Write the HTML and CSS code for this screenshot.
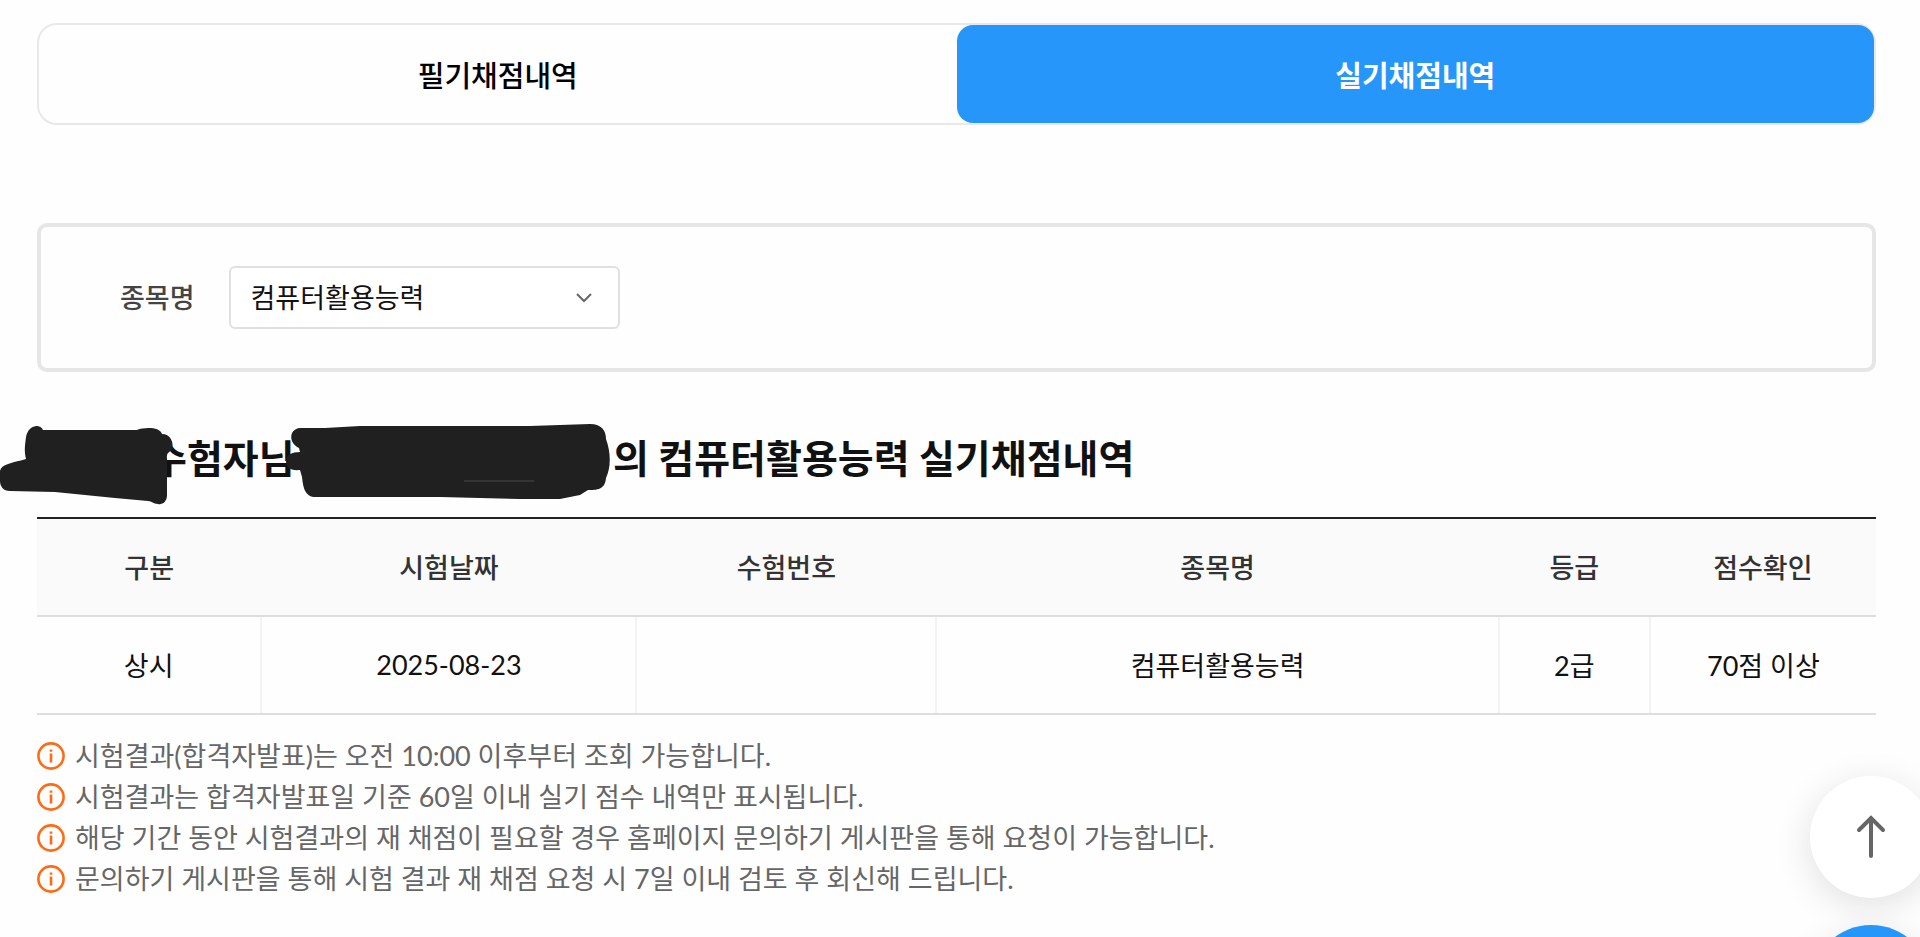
FILE: index.html
```html
<!DOCTYPE html>
<html lang="ko">
<head>
    <meta charset="UTF-8">
    <meta name="viewport" content="width=device-width, initial-scale=1">
    <title>실기채점내역</title>
    <link rel="stylesheet" href="styles.css">
</head>
<body>
    <main class="container">
        <nav class="tabs">
            <a href="#written">필기채점내역</a>
            <a href="#practical" class="on">실기채점내역</a>
        </nav>

        <form class="search-box">
            <label for="subject">종목명</label>
            <select id="subject">
                <option>컴퓨터활용능력</option>
            </select>
            <svg class="chevron" viewBox="0 0 18 12"><path d="M2 2l7 7 7-7"/></svg>
        </form>

        <h1 class="title">
            <span class="who">수험자님</span>
            <span class="what">의 컴퓨터활용능력 실기채점내역</span>
            <!-- 개인정보 가림 -->
            <svg class="mask" viewBox="0 0 620 100" aria-hidden="true">
                <path d="M26 44C24 36 25 30 26 22C28 10 40 8 43 15L137 15C145 12 160 12 162 19C170 19 174 27 172 33C171 38 166 36 167 44L167 80C167 87 162 90 158 89C153 89 152 86 148 86L115 83L55 77L10 76C3 76 0 71 0 66V56C1 49 12 48 26 44Z"/>
                <path d="M299 33C288 28 289 14 300 13L325 13L360 11L530 11L590 9C602 9 606 16 606 24C611 38 611 52 606 63C605 75 597 75 588 75L580 80L560 84L520 84L440 82L314 82C304 81 303 70 302 62L300 55C290 56 286 52 286 46C286 40 292 37 300 37Z"/>
                <path class="gap" d="M464 66h70"/>
            </svg>
        </h1>

        <table class="result">
            <colgroup>
                <col class="w-type"><col class="w-date"><col class="w-num"><col class="w-name"><col class="w-grade"><col class="w-score">
            </colgroup>
            <thead>
                <tr>
                    <th>구분</th>
                    <th>시험날짜</th>
                    <th>수험번호</th>
                    <th>종목명</th>
                    <th>등급</th>
                    <th>점수확인</th>
                </tr>
            </thead>
            <tbody>
                <tr>
                    <td>상시</td>
                    <td>2025-08-23</td>
                    <td></td>
                    <td>컴퓨터활용능력</td>
                    <td>2급</td>
                    <td>70점 이상</td>
                </tr>
            </tbody>
        </table>

        <ul class="notice">
            <li><svg viewBox="0 0 28 28"><circle cx="14" cy="14" r="12.6"/><path d="M14 11.5v9M14 7.5v2.2"/></svg>시험결과(합격자발표)는 오전 10:00 이후부터 조회 가능합니다.</li>
            <li><svg viewBox="0 0 28 28"><circle cx="14" cy="14" r="12.6"/><path d="M14 11.5v9M14 7.5v2.2"/></svg>시험결과는 합격자발표일 기준 60일 이내 실기 점수 내역만 표시됩니다.</li>
            <li><svg viewBox="0 0 28 28"><circle cx="14" cy="14" r="12.6"/><path d="M14 11.5v9M14 7.5v2.2"/></svg>해당 기간 동안 시험결과의 재 채점이 필요할 경우 홈페이지 문의하기 게시판을 통해 요청이 가능합니다.</li>
            <li><svg viewBox="0 0 28 28"><circle cx="14" cy="14" r="12.6"/><path d="M14 11.5v9M14 7.5v2.2"/></svg>문의하기 게시판을 통해 시험 결과 재 채점 요청 시 7일 이내 검토 후 회신해 드립니다.</li>
        </ul>
    </main>

    <div class="quick">
        <button type="button" class="top" aria-label="맨 위로">
            <svg viewBox="0 0 32 44"><path d="M16 41V3M4 15L16 3l12 12"/></svg>
        </button>
        <button type="button" class="chat" aria-label="상담"></button>
    </div>
</body>
</html>
```
FILE: styles.css
```css
* {
    margin: 0;
    padding: 0;
    box-sizing: border-box;
}
body {
    background-color: #fefefe;
    color: #111;
    font-family: Lato, "Noto Sans CJK KR", sans-serif;
    font-size: 27px;
    overflow: hidden;
}
.container {
    padding: 23px 44px 0 37px;
}

/* 탭 */
.tabs {
    display: flex;
    height: 102px;
    border: 2px solid #e8e8e8;
    border-radius: 20px;
}
.tabs a {
    flex: 1;
    display: flex;
    align-items: center;
    justify-content: center;
    border-radius: 16px;
    color: #000;
    font-size: 29px;
    font-weight: 500;
    text-decoration: none;
}
.tabs .on {
    background-color: #2696fa;
    color: #fff;
    font-weight: 700;
}

/* 검색 */
.search-box {
    display: flex;
    align-items: center;
    margin-top: 98px;
    padding: 39px 79px;
    border: 4px solid #e6e6e6;
    border-radius: 10px;
}
.search-box label {
    margin-right: 34px;
    padding-bottom: 2px;
    color: #444;
    font-weight: 500;
}
.search-box select {
    width: 391px;
    height: 63px;
    padding: 0 20px;
    appearance: none;
    border: 2px solid #e0e0e0;
    border-radius: 6px;
    background-color: #fff;
    color: #111;
    font: inherit;
}
.chevron {
    width: 18px;
    height: 12px;
    margin-left: -45px;
    fill: none;
    stroke: #666;
    stroke-width: 2;
    pointer-events: none;
}

/* 제목 */
.title {
    position: relative;
    display: flex;
    margin-top: 58px;
    padding-left: 114px;
    font-size: 39px;
    font-weight: 700;
    line-height: 56px;
    white-space: nowrap;
}
.who {
    width: 462px;
}
.mask {
    position: absolute;
    left: -37px;
    top: -15px;
    width: 620px;
    height: 100px;
    fill: #202020;
}
.mask .gap {
    stroke: #484848;
}

/* 결과표 */
.result {
    width: 100%;
    margin-top: 31px;
    table-layout: fixed;
    border-collapse: collapse;
    border-top: 2px solid #222;
    text-align: center;
}
.result th,
.result td {
    height: 98px;
    padding-bottom: 2px;
    border-bottom: 2px solid #dedede;
}
.result th {
    background-color: #fafafa;
    color: #333;
    font-weight: 500;
}
.result td + td {
    border-left: 2px solid #f3f3f3;
}
.w-type {
    width: 12.2%;
}
.w-date {
    width: 20.4%;
}
.w-num {
    width: 16.3%;
}
.w-name {
    width: 30.6%;
}
.w-grade {
    width: 8.2%;
}
.w-score {
    width: 12.3%;
}

/* 안내 */
.notice {
    margin-top: 20px;
    color: #666;
    list-style: none;
}
.notice li {
    display: flex;
    align-items: center;
    gap: 10px;
    line-height: 41px;
}
.notice svg {
    width: 28px;
    height: 28px;
    fill: none;
    stroke: #ff6a13;
    stroke-width: 2.6;
}

/* 우측 하단 버튼 */
.quick {
    position: fixed;
    top: 776px;
    right: -12px;
}
.quick button {
    display: flex;
    align-items: center;
    justify-content: center;
    width: 122px;
    height: 122px;
    margin-bottom: 27px;
    border: 0;
    border-radius: 50%;
    box-shadow: 0 8px 36px rgba(0, 0, 0, 0.12);
}
.quick .top {
    background-color: #fff;
}
.quick .chat {
    background-color: #2696fa;
}
.quick svg {
    width: 32px;
    height: 44px;
    fill: none;
    stroke: #666;
    stroke-width: 4;
    stroke-linecap: round;
}
```
